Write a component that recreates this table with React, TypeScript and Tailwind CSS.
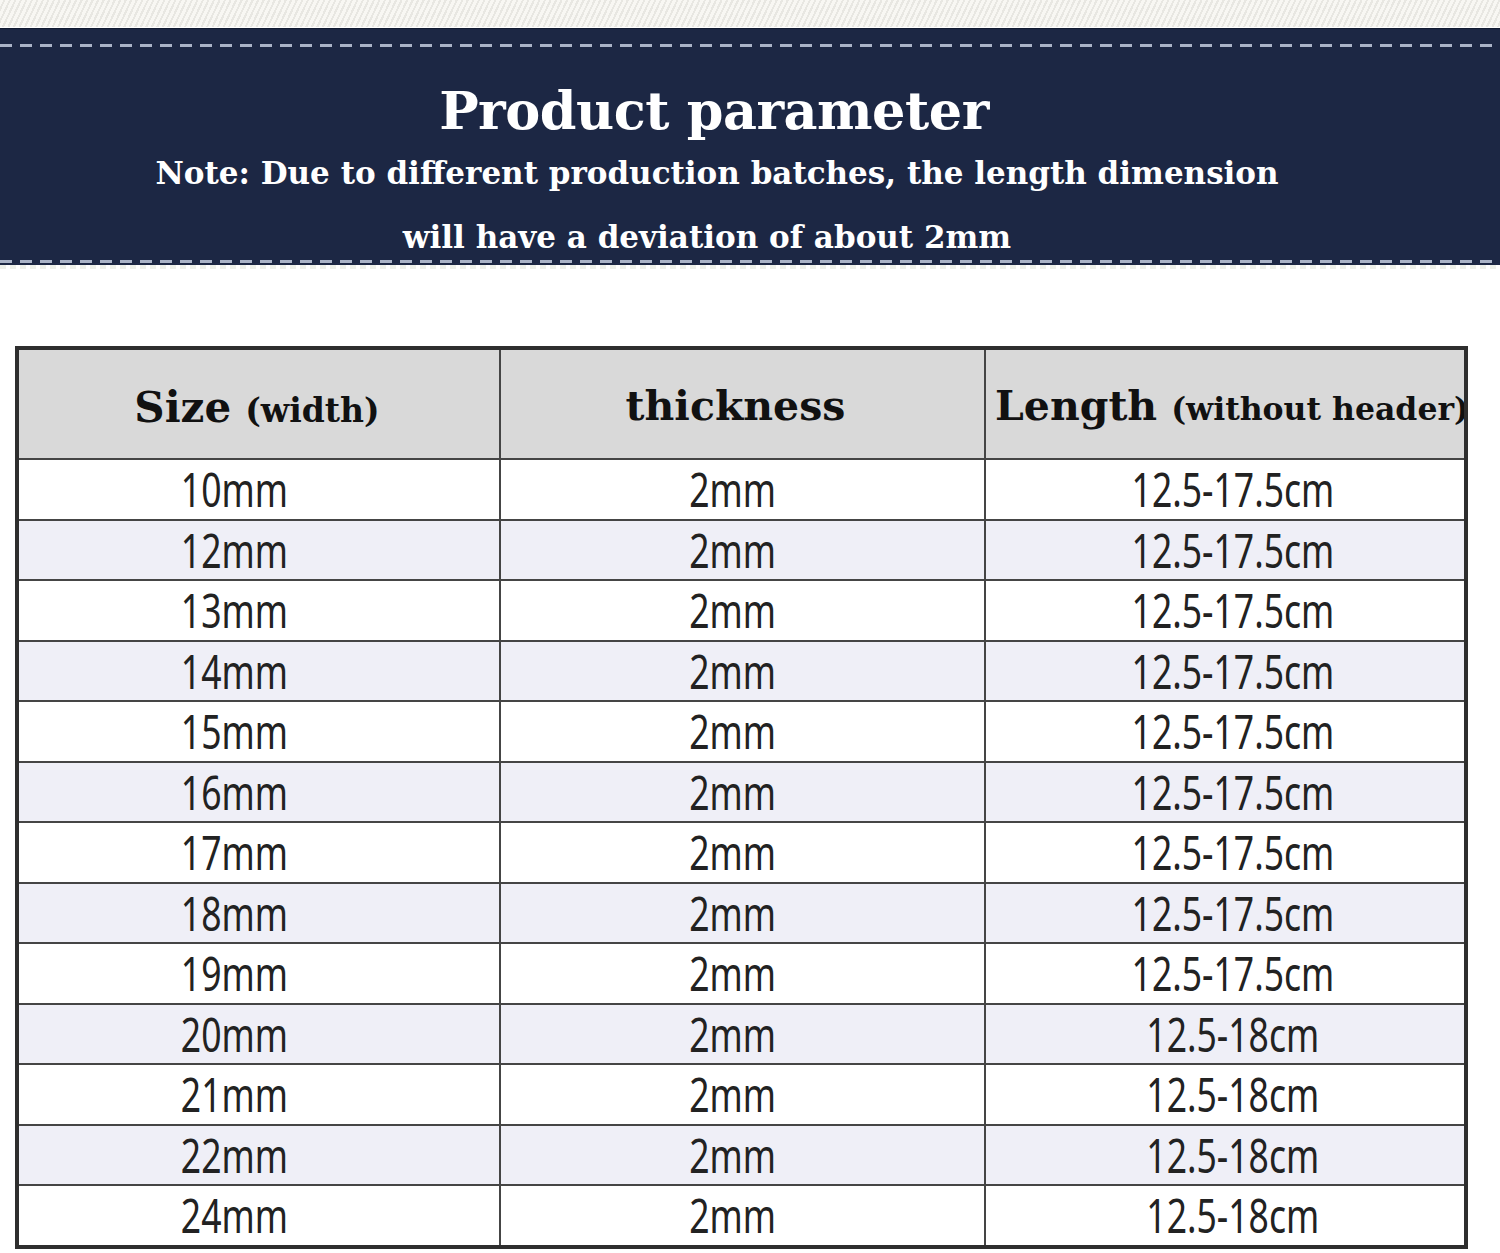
const rows = [
  ["10mm", "2mm", "12.5-17.5cm"],
  ["12mm", "2mm", "12.5-17.5cm"],
  ["13mm", "2mm", "12.5-17.5cm"],
  ["14mm", "2mm", "12.5-17.5cm"],
  ["15mm", "2mm", "12.5-17.5cm"],
  ["16mm", "2mm", "12.5-17.5cm"],
  ["17mm", "2mm", "12.5-17.5cm"],
  ["18mm", "2mm", "12.5-17.5cm"],
  ["19mm", "2mm", "12.5-17.5cm"],
  ["20mm", "2mm", "12.5-18cm"],
  ["21mm", "2mm", "12.5-18cm"],
  ["22mm", "2mm", "12.5-18cm"],
  ["24mm", "2mm", "12.5-18cm"],
];

const serif = "font-['DejaVu_Serif','Liberation_Serif',serif] font-bold";

const Stitch = () => (
  <div className="h-[3px] w-full bg-[repeating-linear-gradient(90deg,#aab3c7_0_12px,transparent_12px_20px)]" />
);

const Cell = ({ text, className }: { text: string; className?: string }) => (
  <div className={`flex items-center justify-center border-[#454545] ${className ?? ""}`}>
    <span className="inline-block scale-x-[0.74] font-['Noto_Sans',sans-serif] text-[48px] leading-none text-[#222]">
      {text}
    </span>
  </div>
);

export default function App() {
  return (
    <div className="w-[1500px] h-[1253px] bg-white overflow-hidden">
      <div className="h-[27px] bg-[repeating-linear-gradient(115deg,#f8f7f3_0_3px,#e8e7e2_3px_5px)]" />
      <div className="h-px bg-white" />
      <div className="h-[237px] bg-[#1c2744] border-t border-[#111a30] flex flex-col">
        <div className="pt-[15px]">
          <Stitch />
        </div>
        <div className={`flex flex-col items-center pr-[72px] text-white ${serif}`}>
          <h1 className="mt-[38px] text-[52.5px] leading-none tracking-[-0.5px]">Product parameter</h1>
          <p className="mt-[20px] pl-[6px] text-[31px] leading-none">
            Note: Due to different production batches, the length dimension
          </p>
          <p className="mt-[33px] pr-[14px] text-[31px] leading-none">will have a deviation of about 2mm</p>
        </div>
        <div className="mt-auto pb-[2px]">
          <Stitch />
        </div>
      </div>
      <div className="h-[4px] bg-[repeating-linear-gradient(90deg,#eef0ea_0_6px,#ffffff_6px_10px)]" />

      <div className="mt-[77px] ml-[15px] w-[1453px] border-4 border-[#2e2e2e]">
        <div className="grid grid-cols-[480px_485px_1fr] h-[108px] bg-[#d9d9d9] text-[#111]">
          <div className={`flex items-baseline justify-center pl-[-4px] pr-[4px] pt-[26px] ${serif}`}>
            <span className="text-[42px]">Size</span>
            <span className="ml-[14px] text-[33px]">(width)</span>
          </div>
          <div className={`flex items-baseline justify-center border-l-2 border-[#454545] pr-[14px] pt-[26px] ${serif}`}>
            <span className="text-[41px]">thickness</span>
          </div>
          <div className={`flex items-baseline border-l-2 border-[#454545] pl-[9px] pt-[26px] overflow-hidden whitespace-nowrap ${serif}`}>
            <span className="text-[41px]">Length</span>
            <span className="ml-[14px] text-[31.5px]">(without header)</span>
          </div>
        </div>
        {rows.map((r, i) => (
          <div
            key={r[0]}
            className={`grid grid-cols-[480px_485px_1fr] h-[60.5px] border-t-2 border-[#454545] ${i % 2 === 1 ? "bg-[#efeff7]" : "bg-white"}`}
          >
            <Cell text={r[0]} className="pr-[50px]" />
            <Cell text={r[1]} className="border-l-2 pr-[20px]" />
            <Cell text={r[2]} className="border-l-2 pl-[16px]" />
          </div>
        ))}
      </div>
    </div>
  );
}
